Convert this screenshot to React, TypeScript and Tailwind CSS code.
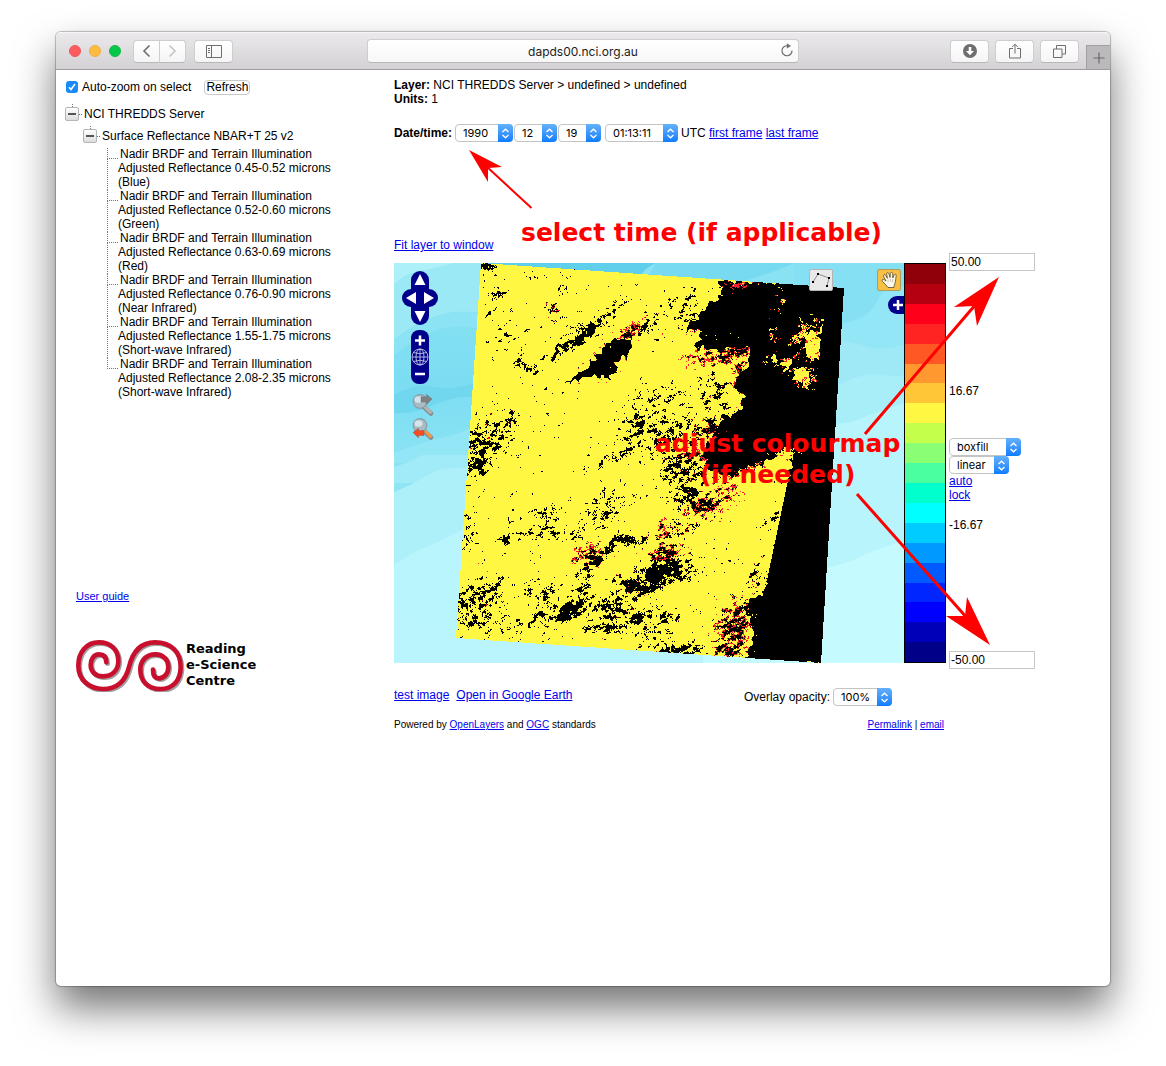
import React from "react";

/* ---------- shared controls ---------- */

function Select({ label, value, className }: { label: string; value: string; className: string }) {
  return (
    <span className={`relative inline-flex h-[18px] shrink-0 ${className}`}>
      <select
        aria-label={label}
        defaultValue={value}
        className="h-full w-full appearance-none rounded-[4px] border border-[#c4c4c4] bg-white pl-[7px] font-[Inter,sans-serif] text-[11px] leading-4 text-black"
      >
        <option>{value}</option>
      </select>
      <span className="pointer-events-none absolute inset-y-0 right-0 flex w-[15px] items-center justify-center rounded-r-[4px] bg-linear-to-b from-[#62b1fb] to-[#0a7cfe]">
        <svg width="7" height="11" viewBox="0 0 7 11" fill="none" stroke="white" strokeWidth="1.3">
          <path d="M.5 4 3.5 1.200 6.500 4M.5 7 3.500 9.800 6.500 7" />
        </svg>
      </span>
    </span>
  );
}

function Link({ children }: { children: React.ReactNode }) {
  return (
    <a href="#" className="text-[#0000ee] underline">
      {children}
    </a>
  );
}

/* ---------- browser toolbar ---------- */

const toolButton =
  "flex h-[23px] items-center justify-center rounded-[4px] border border-[#cfcdd0] border-b-[#b9b7ba] bg-linear-to-b from-white to-[#f6f5f6] text-[#6e6e6e]";

function Toolbar() {
  return (
    <header className="grid h-[38px] shrink-0 grid-cols-[1fr_432px_1fr] items-center rounded-t-[5px] border-b border-[#9d9b9e] border-t border-t-[#f7f6f7] bg-linear-to-b from-[#ebe9eb] to-[#d3d1d4]">
      <div className="flex items-center pl-[13px]">
        <div className="flex gap-2">
          <span className="size-3 rounded-full border border-[#f0575a] bg-[#fc5b5d]" />
          <span className="size-3 rounded-full border border-[#f0b040] bg-[#fdbc40]" />
          <span className="size-3 rounded-full border border-[#0cbc45] bg-[#05c84a]" />
        </div>
        <div className="ml-3 flex">
          <button aria-label="Back" className={`${toolButton} w-[27px] rounded-r-none`}>
            <svg width="9" height="14" viewBox="0 0 9 14" fill="none" stroke="currentColor" strokeWidth="1.6">
              <path d="M7.5 1.5 2 7l5.500 5.500" />
            </svg>
          </button>
          <button aria-label="Forward" className={`${toolButton} w-[26px] rounded-l-none border-l-0`}>
            <svg width="9" height="14" viewBox="0 0 9 14" fill="none" stroke="#c4c4c4" strokeWidth="1.6">
              <path d="M1.500 1.500 7 7l-5.500 5.500" />
            </svg>
          </button>
        </div>
        <button aria-label="Show sidebar" className={`${toolButton} ml-2 w-[39px]`}>
          <svg width="16" height="13" viewBox="0 0 16 13" fill="none" stroke="currentColor">
            <path d="M.5.500h15v12H.5zM5.500.500v12M2 3.500h2M2 5.500h2M2 7.500h2" />
          </svg>
        </button>
      </div>
      <div className="relative">
        <input
          aria-label="Address"
          defaultValue="dapds00.nci.org.au"
          className="block h-6 w-full rounded-[4px] border border-[#cfcdd0] border-b-[#b9b7ba] bg-linear-to-b from-white to-[#f8f7f8] text-center font-[Inter,sans-serif] text-[12px] text-[#1c1c1c]"
        />
        <button aria-label="Reload" className="absolute right-[5px] top-1 text-[#6e6e6e]">
          <svg width="14" height="14" viewBox="0 0 14 14" fill="none" stroke="currentColor" strokeWidth="1.200">
            <path d="M7.800 2.800a5 5 0 1 0 4.200 4.700" />
            <path d="M6.800.3 11 2.900 6.800 5.400z" fill="currentColor" stroke="none" />
          </svg>
        </button>
      </div>
      <div className="flex h-full items-center justify-end gap-[6px]">
        <button aria-label="Downloads" className={`${toolButton} w-[39px]`}>
          <svg width="14" height="14" viewBox="0 0 14 14">
            <circle cx="7" cy="7" r="7" fill="#6e6e6e" />
            <path d="M5.700 3h2.600v4H11L7 11.300 3 7h2.700z" fill="white" />
          </svg>
        </button>
        <button aria-label="Share" className={`${toolButton} w-[39px]`}>
          <svg width="12" height="16" viewBox="0 0 12 16" fill="none" stroke="currentColor">
            <path d="M4 5.500H.5v9.500h11V5.500H8M6 10.500V1.500M3.200 4 6 1.200 8.800 4" />
          </svg>
        </button>
        <button aria-label="Show tabs" className={`${toolButton} mr-px w-[39px]`}>
          <svg width="13" height="13" viewBox="0 0 13 13" fill="none" stroke="currentColor">
            <path d="M.5 4h8.500v8.500H.5zM3.500 4V.500h9V9H9" />
          </svg>
        </button>
        <button
          aria-label="New tab"
          className="flex h-6 w-[24px] items-center justify-center self-end border-l border-t border-[#a3a1a4] bg-[#bbb9bc] text-[#6a6a6a]"
        >
          <svg width="12" height="12" viewBox="0 0 12 12" stroke="currentColor" strokeWidth="1.200">
            <path d="M6 .5v11M.5 6h11" />
          </svg>
        </button>
      </div>
    </header>
  );
}

/* ---------- layer tree ---------- */

const layers = [
  ["0.45-0.52", "Blue"],
  ["0.52-0.60", "Green"],
  ["0.63-0.69", "Red"],
  ["0.76-0.90", "Near Infrared"],
  ["1.55-1.75", "Short-wave Infrared"],
  ["2.08-2.35", "Short-wave Infrared"],
];

function TreeHead({ children }: { children: React.ReactNode }) {
  return (
    <div className="flex h-[22px] items-center">
      <span className="flex flex-col items-center">
        <span className="h-[3px] border-l border-dotted border-[#777]" />
        <button
          aria-label="Collapse"
          className="flex h-[14px] w-[14px] items-center justify-center rounded-[2px] border border-[#b4b4b4] bg-linear-to-b from-white to-[#dcdcdc]"
        >
          <span className="h-[2px] w-2 bg-[#555]" />
        </button>
        <span className="h-[3px]" />
      </span>
      <span className="mr-[2px] w-[3px] border-t border-dotted border-[#777]" />
      <span>{children}</span>
    </div>
  );
}

function Sidebar() {
  return (
    <aside className="w-[338px] shrink-0 pl-[9px] pt-2">
      <div className="flex h-[18px] items-center">
        <label className="flex items-center">
          <input type="checkbox" defaultChecked className="peer sr-only" />
          <span className="ml-px mr-[4px] flex size-3 items-center justify-center rounded-[3px] bg-[#1a8cfa]">
            <svg width="8" height="8" viewBox="0 0 8 8" fill="none" stroke="white" strokeWidth="1.500">
              <path d="M1 4.300 3 6.500 7 1" />
            </svg>
          </span>
          Auto-zoom on select
        </label>
        <button className="ml-[13px] h-[15px] rounded-[4px] border border-[#c8c8c8] bg-white px-px leading-[13px]">
          Refresh
        </button>
      </div>
      <div className="mt-[7px]">
        <TreeHead>NCI THREDDS Server</TreeHead>
        <div className="pl-[18px]">
          <TreeHead>Surface Reflectance NBAR+T 25 v2</TreeHead>
          <ul className="pl-6">
            {layers.map(([range, name], i) => (
              <li key={range} className="relative w-[240px] pl-[11px] indent-[2px]">
                <span className="absolute left-0 top-px h-[11px] w-[11px] border-b border-l border-dotted border-[#777]" />
                {i < layers.length - 1 && (
                  <span className="absolute left-0 top-3 h-[31px] border-l border-dotted border-[#777]" />
                )}
                Nadir BRDF and Terrain Illumination
                <br />
                <span className="block indent-0">Adjusted Reflectance {range} microns</span>
                <span className="block indent-0">({name})</span>
              </li>
            ))}
          </ul>
        </div>
      </div>
      <div className="mt-[190px] pl-[11px] text-[11px]">
        <Link>User guide</Link>
      </div>
      <div className="mt-[35px] flex items-center gap-px pl-[10px]">
        <svg width="110" height="54" viewBox="58 203 330 162" fill="none" strokeWidth="14" strokeLinecap="round">
          <defs>
            <path
              id="spiral"
              d="M152 276C152 262 146 252 130 252C115 252 105 266 105 284C105 304 120 318 142 318C168 318 188 302 188 272C188 238 165 216 130 216C92 216 68 246 68 286C68 328 100 356 142 356C185 356 210 330 220 290C230 248 252 216 298 216C345 216 375 244 375 290C375 330 352 356 314 356C276 356 254 332 254 298C254 270 272 252 300 252C322 252 338 268 338 290C338 312 324 324 310 324C298 324 292 314 292 298"
            />
          </defs>
          <use href="#spiral" stroke="#777" x="4" y="4" opacity="0.7" />
          <use href="#spiral" stroke="#c8102e" />
        </svg>
        <p className="font-['DejaVu_Sans',sans-serif] text-[13px] font-bold leading-4">
          Reading
          <br />
          e-Science
          <br />
          Centre
        </p>
      </div>
    </aside>
  );
}

/* ---------- satellite layer ---------- */

const W = 510;
const H = 400;

type Pt = [number, number];

const scene: Pt[] = [[87, 0], [450, 25], [427, 400], [62, 375]];

const darkAreas: Pt[][] = [
  [
    [326, 17], [323, 34], [309, 49], [286, 67], [304, 64], [303, 84], [326, 86], [353, 84], [353, 105],
    [338, 117], [349, 134], [346, 145], [328, 152], [318, 169], [314, 184], [308, 194], [316, 207],
    [336, 212], [359, 204], [379, 195], [389, 187], [400, 186], [372, 319], [369, 327], [354, 337],
    [358, 379], [349, 400], [430, 400], [452, 20],
  ],
  [[238, 73], [218, 76], [206, 90], [183, 108], [172, 121], [193, 114], [216, 115], [224, 109], [219, 99], [234, 89]],
  [[158, 92], [166, 83], [183, 72], [196, 65], [209, 54], [211, 57], [196, 70], [179, 75], [163, 91]],
  [[133, 362], [142, 352], [153, 348], [154, 350], [143, 356], [136, 364]],
  [[161, 354], [168, 344], [180, 338], [190, 342], [180, 348], [170, 356]],
];

const lightAreas: Pt[][] = [
  [[429, 56], [424, 66], [409, 72], [414, 82], [411, 90], [420, 99]],
  [[400, 110], [407, 105], [416, 109], [414, 128], [409, 116], [398, 117]],
  [[377, 92], [383, 98], [381, 103], [375, 99]],
  [[392, 95], [397, 99], [391, 110], [387, 109]],
];

/* cx, cy, rx, ry, rotation in degrees, strength, share of red */
const clusters: number[][] = [
  [91, 2, 9, 5, 0, 0.8, 0.1], [97, 15, 10, 30, 0, 0.35, 0.05], [92, 50, 8, 12, 0, 0.45, 0.05],
  [106, 32, 9, 6, 0, 0.45, 0], [135, 14, 14, 8, 0, 0.35, 0.1], [158, 46, 8, 10, -30, 0.5, 0.4],
  [168, 30, 6, 30, 0, 0.32, 0.1], [190, 70, 40, 9, -38, 0.6, 0.02], [183, 77, 26, 5, -38, 0.8, 0.02],
  [222, 48, 20, 5, -35, 0.45, 0.1],
  [236, 67, 16, 6, -35, 0.8, 0.75], [252, 62, 10, 7, -35, 0.66, 0.1], [125, 99, 9, 7, 0, 0.6, 0.05],
  [138, 107, 7, 7, 0, 0.6, 0.05], [160, 98, 5, 6, 0, 0.5, 0], [95, 175, 28, 19, -40, 0.64, 0.1],
  [83, 200, 11, 20, 30, 0.62, 0.05], [115, 156, 8, 13, 0, 0.62, 0.1], [244, 160, 18, 30, 20, 0.5, 0.05],
  [232, 188, 36, 6, -25, 0.6, 0.1], [268, 140, 30, 16, -20, 0.48, 0.02], [275, 170, 32, 24, -20, 0.48, 0.02],
  [262, 58, 16, 18, 0, 0.4, 0.2], [293, 47, 22, 16, -40, 0.45, 0.1], [328, 93, 32, 10, -8, 0.68, 0.6],
  [345, 110, 9, 14, 0, 0.62, 0.7], [322, 128, 20, 26, -20, 0.4, 0.2], [312, 165, 18, 16, 0, 0.6, 0.35],
  [290, 204, 26, 22, 0, 0.62, 0.15], [300, 190, 18, 12, 0, 0.66, 0.7], [291, 232, 15, 16, 20, 0.68, 0.15],
  [308, 242, 20, 11, -20, 0.78, 0.6], [325, 232, 20, 14, -15, 0.56, 0.8], [330, 209, 18, 6, 0, 0.66, 0.5],
  [286, 262, 32, 14, -20, 0.48, 0.3], [268, 264, 6, 14, 0, 0.6, 0.8], [272, 290, 19, 10, 0, 0.76, 0.55],
  [268, 308, 27, 13, -20, 0.86, 0.1], [258, 322, 22, 8, -20, 0.8, 0.05], [288, 306, 16, 14, -40, 0.55, 0.1],
  [243, 322, 20, 13, 0, 0.76, 0.2], [217, 350, 22, 20, -40, 0.62, 0.1], [214, 364, 24, 6, -5, 0.72, 0.05],
  [244, 355, 20, 8, -30, 0.66, 0.05], [262, 358, 32, 12, -20, 0.42, 0.1], [192, 290, 13, 8, -20, 0.84, 0.7],
  [201, 296, 13, 7, -10, 0.8, 0.4], [218, 282, 17, 5, -50, 0.66, 0], [235, 276, 18, 5, 10, 0.8, 0],
  [190, 320, 10, 20, 20, 0.58, 0.05], [177, 346, 26, 12, -30, 0.66, 0.02], [152, 340, 24, 18, -40, 0.48, 0],
  [82, 338, 26, 18, -20, 0.6, 0.05], [80, 352, 16, 16, 0, 0.5, 0.1], [100, 324, 16, 12, 0, 0.48, 0.1],
  [155, 268, 36, 9, 5, 0.46, 0], [113, 275, 8, 5, -40, 0.7, 0], [148, 252, 32, 16, 0, 0.36, 0],
  [212, 245, 36, 18, -40, 0.42, 0.05], [72, 265, 10, 32, 0, 0.36, 0], [378, 255, 10, 10, 0, 0.5, 0],
  [365, 312, 12, 16, 0, 0.46, 0.3], [340, 362, 17, 28, 20, 0.7, 0.6], [334, 388, 14, 12, 0, 0.76, 0.65],
  [352, 345, 12, 12, 0, 0.7, 0.3], [276, 387, 28, 6, 4, 0.68, 0.1], [300, 386, 8, 8, 0, 0.74, 0.05],
  [256, 372, 36, 8, 4, 0.42, 0.05], [135, 326, 5, 50, 0, 0.36, 0], [110, 362, 30, 14, 0, 0.34, 0],
  [330, 300, 20, 20, 0, 0.2, 0], [110, 75, 25, 30, 0, 0.26, 0],
];

/* red and yellow flecks that show inside the dark area */
const flecks: number[][] = [
  [345, 22, 22, 7, 0, 0.72, 0.75], [386, 36, 7, 12, 0, 0.66, 0.5], [380, 70, 5, 28, 0, 0.6, 0.4],
  [378, 98, 9, 7, 0, 0.75, 0.4], [392, 102, 9, 11, 0, 0.75, 0.5], [411, 68, 20, 12, -40, 0.75, 0.4],
  [410, 92, 13, 10, 0, 0.66, 0.6], [409, 114, 13, 14, 0, 0.75, 0.5], [398, 82, 10, 5, -30, 0.66, 0.5],
  [325, 72, 22, 5, 10, 0.5, 0.5], [388, 192, 16, 10, -30, 0.72, 0.2], [358, 205, 24, 7, -15, 0.66, 0.6],
  [322, 172, 10, 12, 0, 0.5, 0.7], [360, 365, 6, 26, 0, 0.55, 0.6], [344, 88, 12, 5, 0, 0.55, 0.5],
];

function hash(x: number, y: number, seed: number) {
  let h = Math.imul(x, 374761393) + Math.imul(y, 668265263) + Math.imul(seed, 974634777);
  h = Math.imul(h ^ (h >>> 13), 1274126177);
  h = Math.imul(h ^ (h >>> 15), 2246822519);
  return ((h ^ (h >>> 16)) >>> 0) / 4294967296;
}

function smooth(x: number, y: number, sx: number, sy: number, seed: number) {
  const u = x / sx;
  const v = y / sy;
  const i = Math.floor(u);
  const j = Math.floor(v);
  const a = u - i;
  const b = v - j;
  const top = hash(i, j, seed) * (1 - a) + hash(i + 1, j, seed) * a;
  const bottom = hash(i, j + 1, seed) * (1 - a) + hash(i + 1, j + 1, seed) * a;
  return top * (1 - b) + bottom * b;
}

function inside(x: number, y: number, poly: Pt[]) {
  let hit = false;
  for (let i = 0, j = poly.length - 1; i < poly.length; j = i++) {
    const [xi, yi] = poly[i];
    const [xj, yj] = poly[j];
    if (yi > y !== yj > y && x < ((xj - xi) * (y - yi)) / (yj - yi) + xi) hit = !hit;
  }
  return hit;
}

function field(x: number, y: number, list: number[][], base: number): [number, number] {
  let best = base;
  let red = 0.06;
  for (const [cx, cy, rx, ry, deg, amp, r] of list) {
    const dx = x - cx;
    const dy = y - cy;
    if (Math.abs(dx) > 80 || Math.abs(dy) > 80) continue;
    const t = (deg * Math.PI) / 180;
    const u = (dx * Math.cos(t) + dy * Math.sin(t)) / rx;
    const v = (dy * Math.cos(t) - dx * Math.sin(t)) / ry;
    const f = amp * Math.exp(-(u * u + v * v) * 0.6);
    if (f > best) {
      best = f;
      red = r;
    }
  }
  return [best, red];
}

function rasterise() {
  const paths = { black: "", red: "", yellow: "" };
  const fills = ["", "black", "red", "yellow"] as const;
  for (let y = 0; y < H; y++) {
    let run = 0;
    let start = 0;
    for (let x = 0; x <= W; x++) {
      let c = 0;
      if (x < W && inside(x + 0.5, y + 0.5, scene)) {
        const ox = smooth(x, y, 4, 4, 5) - 0.5;
        const oy = smooth(x, y, 4, 4, 6) - 0.5;
        const wx = x + ox * 9;
        const wy = y + oy * 9;
        const straight = (y > 212 && y < 318 && x > 355) || x > 424;
        const dark = darkAreas.some((p) => (straight ? inside(x, y, p) : inside(wx, wy, p)));
        const light = dark && lightAreas.some((p) => inside(wx, wy, p));
        const n =
          0.45 * smooth(x + y * 0.6, y, 4, 3, 1) + 0.35 * smooth(x, y, 2, 2, 2) + 0.2 * hash(x, y, 3);
        const tint = hash(x >> 1, y, 4) * 0.5 + hash(x, y, 9) * 0.5;
        if (dark && !light) {
          const [d, r] = field(x, y, flecks, 0);
          c = x < 432 && n > 1.02 - d * 0.72 ? (tint < r ? 2 : 3) : 1;
        } else {
          const [d, r] = field(x, y, clusters, 0.11);
          const edge = 0.9 - d * 0.72;
          const rim =
            !straight && !light && y > 60 && darkAreas.slice(0, 2).some((p) => inside(x + ox * 17, y + oy * 17, p));
          if (n > edge) c = n < edge + 0.1 && tint < r * 1.2 ? 2 : 1;
          else c = rim && tint < 0.45 ? 2 : 3;
          if (light) c = n > 0.7 ? 2 : 3;
        }
      }
      if (c !== run) {
        if (run) paths[fills[run] as "black"] += `M${start} ${y}h${x - start}v1h-${x - start}z`;
        run = c;
        start = x;
      }
    }
  }
  return paths;
}

const layer = rasterise();

function MapImage() {
  return (
    <svg className="block h-full w-full" viewBox={`0 0 ${W} ${H}`} aria-label="Surface reflectance map">
      <defs>
        <linearGradient id="sea" x1="0" y1="0" x2="0" y2="1">
          <stop offset="0" stopColor="#8ae3f3" />
          <stop offset="0.3" stopColor="#7cddf2" />
          <stop offset="0.5" stopColor="#8ae3f4" />
          <stop offset="1" stopColor="#baf5fd" />
        </linearGradient>
      </defs>
      <path fill="url(#sea)" d="M0 0H510V400H0z" />
      <path fill="#aef0f9" d="M0 0H60Q40 6 26 8T0 22z" />
      <path fill="#9ce9f6" d="M0 22Q14 10 26 8T60 0H88V50Q60 46 40 54T0 76z" />
      <path fill="#8be3f4" d="M0 76Q20 62 40 54T88 50V66Q60 60 40 68T0 92z" />
      <path fill="#70d7ef" d="M0 132Q20 120 40 124T84 118V134Q60 132 40 142T0 150z" />
      <path fill="#93e6f5" d="M0 190Q30 178 50 174T84 160V200H0z" />
      <path fill="#a0ebf7" d="M0 204Q14 200 28 192H84V220H0z" />
      <path fill="#aef0fa" d="M0 229Q16 223 32 213T74 205V400H0z" />
      <path fill="#b9f5fd" d="M0 302Q14 292 30 285T48 277L70 266V400H0z" />
      <path fill="#5fcfec" d="M87 0H262Q240 10 250 22L140 12z" />
      <path fill="#78daf0" d="M262 0H400Q380 10 330 24L250 20z" />
      <path fill="#86e0f3" d="M400 0H510V60H400z" />
      <path fill="#93e6f5" d="M440 62Q474 58 482 40T510 24V90H440z" />
      <path fill="#9fe9f7" d="M440 76Q462 80 474 84T510 82V140H440z" />
      <path fill="#a8eef9" d="M440 124Q470 108 490 112T510 110V170H430z" />
      <path fill="#b7f4fc" d="M430 160Q452 162 466 156T510 140V400H425z" />
      <path fill="#baf5fd" d="M62 375 309 392V400H0V350z" />
      <path fill="#c5faff" d="M425 306Q450 302 466 294T510 278V400H309V385z" />
      <g shapeRendering="crispEdges">
        <path fill="#fff742" d={layer.yellow} />
        <path fill="#000" d={layer.black} />
        <path fill="#f8202a" d={layer.red} />
      </g>
    </svg>
  );
}

function Magnifier({ tone, arrow, flip }: { tone: string; arrow: string; flip: boolean }) {
  return (
    <svg width="24" height="24" viewBox="0 0 24 24">
      <path d="M13 14 20 20.500" stroke="#8a8a8a" strokeWidth="4.500" strokeLinecap="round" />
      <path d="M13 13 19.500 19.300" stroke={tone} strokeWidth="3" strokeLinecap="round" />
      <circle cx="9" cy="8.500" r="6.800" fill="#a9bcc4" stroke="#8a9da4" strokeWidth="1.200" />
      <ellipse cx="7.500" cy="6.500" rx="4" ry="3.200" fill="#d5e4ea" />
      <path
        d={flip ? "M2 15.500 7.500 11v2.500H13v5H7.500V21z" : "M21 6 15.500 1.500V4H10v5h5.500v2.500z"}
        fill={arrow}
        stroke="#66666680"
        strokeWidth=".8"
      />
    </svg>
  );
}

function MapPanel() {
  return (
    <div className="relative mt-[10px] h-[400px] w-[510px] shrink-0 overflow-hidden">
      <MapImage />
      <button aria-label="Pan map" className="absolute left-2 top-2">
        <svg width="36" height="54" viewBox="0 0 36 54">
          <rect x="9" width="18" height="54" rx="9" fill="#00008b" />
          <rect y="18" width="36" height="18" rx="9" fill="#00008b" />
          <path fill="white" d="M18 3 23.500 14h-11zM18 51 23.500 40h-11zM4 27 14 21V33zM32 27 22 21V33z" />
        </svg>
      </button>
      <button aria-label="Zoom map" className="absolute left-[17px] top-[67px]">
        <svg width="18" height="54" viewBox="0 0 18 54" fill="none">
          <rect width="18" height="54" rx="8" fill="#00008b" />
          <path stroke="white" strokeWidth="2.500" d="M4 10.500H14M9 5.500V15.500M4 44H14" />
          <g stroke="#d5d5f0" strokeWidth=".8">
            <circle cx="9" cy="27" r="8" />
            <ellipse cx="9" cy="27" rx="4" ry="8" />
            <path d="M9 19V35M1 27H17M2.500 22.500Q9 25 15.500 22.500M2.500 31.500Q9 29 15.500 31.500" />
          </g>
        </svg>
      </button>
      <button aria-label="Next view" className="absolute left-[17px] top-[130px]">
        <Magnifier tone="#b5b5b5" arrow="#7d8283" flip={false} />
      </button>
      <button aria-label="Previous view" className="absolute left-[17px] top-[154px]">
        <Magnifier tone="#f39a4a" arrow="#fb4a20" flip />
      </button>
      <button
        aria-label="Draw line"
        className="absolute left-[415px] top-[6px] h-[22px] w-6 rounded-[2px] border border-[#b5b5b5] bg-[#e9e9e9]"
      >
        <svg width="22" height="20" viewBox="0 0 22 20">
          <path d="M3 12 8 4 19 8 17 16" fill="none" stroke="#777" strokeWidth=".8" />
          <path d="M2 11h2v2H2zM7 3h2v2H7zM18 7h2v2h-2zM16 15h2v2h-2z" />
        </svg>
      </button>
      <button
        aria-label="Drag map"
        className="absolute left-[483px] top-[6px] h-[22px] w-6 rounded-[2px] border border-[#b39a5e] bg-[#f8bf45]"
      >
        <svg width="22" height="20" viewBox="0 0 22 20">
          <path
            d="M10 17.500C8.500 15 6 13.500 4.300 11.200c-.8-1.500.8-2.400 2-1.400L8 11 5.600 6.300c-.6-1.500 1.200-2.300 2-1L9.500 8.300 8.600 4c-.2-1.600 1.900-1.900 2.300-.3L12 7.600l.4-4.200c.2-1.500 2.200-1.400 2.300.1l.1 4.400 1.400-3c.8-1.300 2.400-.5 2 .9-.5 2.700-.6 5.700-1.300 7.700-.4 1.300-.9 2.500-.9 4z"
            fill="#fbf8ee"
            stroke="#5b4a25"
            strokeWidth=".8"
          />
          <path d="M10 9.500v3M12.300 9v3M14.600 9.200v3" stroke="#b9ae90" strokeWidth=".7" />
        </svg>
      </button>
      <button
        aria-label="Open layer switcher"
        className="absolute left-[494px] top-[33px] h-[18px] w-6 rounded-l-[9px] bg-[#00008b]"
      >
        <svg width="20" height="18" viewBox="0 0 20 18">
          <path stroke="white" strokeWidth="2.500" d="M5 9H15M10 4V14" />
        </svg>
      </button>
    </div>
  );
}

/* ---------- colour scale ---------- */

function ColourBar() {
  return (
    <div className="mt-[10px] flex h-[400px] w-[42px] shrink-0 flex-col border border-black *:flex-1">
      <span className="bg-[#8f000b]" />
      <span className="bg-[#b5000f]" />
      <span className="bg-[#ff001a]" />
      <span className="bg-[#ff2422]" />
      <span className="bg-[#ff5824]" />
      <span className="bg-[#ff982e]" />
      <span className="bg-[#ffc737]" />
      <span className="bg-[#fff742]" />
      <span className="bg-[#c4ff4c]" />
      <span className="bg-[#8bff74]" />
      <span className="bg-[#4aff9f]" />
      <span className="bg-[#00ffcc]" />
      <span className="bg-[#00ffff]" />
      <span className="bg-[#00ccff]" />
      <span className="bg-[#0099ff]" />
      <span className="bg-[#005aff]" />
      <span className="bg-[#0026ff]" />
      <span className="bg-[#0000ff]" />
      <span className="bg-[#0000b8]" />
      <span className="bg-[#000088]" />
    </div>
  );
}

const rangeInput = "block h-[18px] w-[86px] border border-[#c6c6c6] bg-white px-px text-[12px] leading-4";

function ScaleControls() {
  return (
    <div className="ml-[3px] flex flex-col items-start">
      <input aria-label="Maximum value" defaultValue="50.00" className={rangeInput} />
      <span className="mt-[113px]">16.67</span>
      <div className="mt-10 flex flex-col items-start">
        <Select label="Style" value="boxfill" className="w-[72px]" />
        <Select label="Scale" value="linear" className="w-[60px]" />
      </div>
      <Link>auto</Link>
      <Link>lock</Link>
      <span className="mt-4">-16.67</span>
      <input aria-label="Minimum value" defaultValue="-50.00" className={`${rangeInput} mt-[119px]`} />
    </div>
  );
}

/* ---------- red call-outs drawn over the page ---------- */

const note =
  "pointer-events-none absolute whitespace-nowrap text-center font-['DejaVu_Sans',sans-serif] text-[25px] font-bold leading-[31px] text-[#ff0000]";

function Annotations() {
  return (
    <>
      <p className={`${note} left-[127px] top-[147px]`}>select time (if applicable)</p>
      <p className={`${note} left-[261px] top-[358px]`}>
        adjust colourmap
        <br />
        (if needed)
      </p>
      <svg
        className="pointer-events-none absolute left-0 top-0"
        width="660"
        height="600"
        viewBox="394 70 660 600"
        fill="#ff0000"
        stroke="#ff0000"
        aria-hidden="true"
      >
        <path strokeWidth="2" d="M531.500 208 486 166" />
        <path stroke="none" d="M469 150 502 167 488 168 488 182z" />
        <path strokeWidth="3" d="M865 434 976 304" />
        <path stroke="none" d="M999 277 954 307 974 306 977 326z" />
        <path strokeWidth="3" d="M857 494 967 618" />
        <path stroke="none" d="M990 645 946 616 965 616 967 597z" />
      </svg>
    </>
  );
}

export default function App() {
  return (
    <div className="flex min-h-screen flex-col overflow-hidden bg-white px-14 pb-20 pt-8 font-['Liberation_Sans',Arial,sans-serif] text-[12px] leading-[14px] text-black">
      <div className="flex flex-1 flex-col rounded-[5px] bg-white shadow-[0_0_1px_1px_rgba(0,0,0,0.25),0_22px_40px_rgba(0,0,0,0.55)]">
        <Toolbar />
        <div className="flex flex-1">
          <Sidebar />
          <main className="relative min-w-0 flex-1 pt-2">
            <p>
              <b>Layer:</b> NCI THREDDS Server &gt; undefined &gt; undefined
            </p>
            <p>
              <b>Units:</b> 1
            </p>
            <div className="mt-[18px] flex items-center">
              <b className="mr-[3px]">Date/time:</b>
              <Select label="Year" value="1990" className="mr-px w-[58px]" />
              <Select label="Month" value="12" className="mr-px w-[43px]" />
              <Select label="Day" value="19" className="mr-1 w-[43px]" />
              <Select label="Time" value="01:13:11" className="mr-[3px] w-[73px]" />
              <span>
                UTC <Link>first frame</Link> <Link>last frame</Link>
              </span>
            </div>
            <div className="mt-24">
              <Link>Fit layer to window</Link>
            </div>
            <div className="mt-px flex items-start">
              <MapPanel />
              <ColourBar />
              <ScaleControls />
            </div>
            <div className="mt-[19px] flex max-w-[550px] items-start justify-between pr-[52px]">
              <span className="flex gap-[7px]">
                <Link>test image</Link>
                <Link>Open in Google Earth</Link>
              </span>
              <span className="flex items-center gap-[3px]">
                Overlay opacity:
                <Select label="Overlay opacity" value="100%" className="w-[59px]" />
              </span>
            </div>
            <footer className="mt-3 flex max-w-[550px] justify-between text-[10px]">
              <span>
                Powered by <Link>OpenLayers</Link> and <Link>OGC</Link> standards
              </span>
              <span>
                <Link>Permalink</Link> | <Link>email</Link>
              </span>
            </footer>
            <Annotations />
          </main>
        </div>
      </div>
    </div>
  );
}
